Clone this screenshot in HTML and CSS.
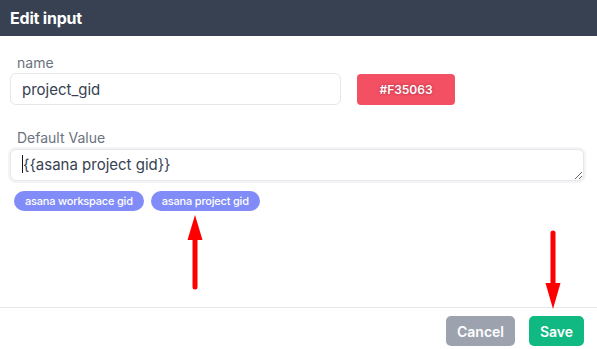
FILE: index.html
```html
<!DOCTYPE html>
<html>
<head>
<meta charset="utf-8">
<link rel="stylesheet" href="styles.css">
</head>
<body>
<div class="modal">
  <div class="header">Edit input</div>
  <div class="content">
    <div class="field">
      <label class="label">name</label>
      <div class="row">
        <input class="input" type="text" value="project_gid">
        <button class="color-btn">#F35063</button>
      </div>
    </div>
    <div class="field field-default">
      <label class="label">Default Value</label>
      <div class="ta-wrap">
        <textarea class="textarea" rows="1">{{asana project gid}}</textarea>
        <span class="caret"></span>
      </div>
      <div class="chips">
        <span class="chip">asana workspace gid</span>
        <span class="chip">asana project gid</span>
      </div>
    </div>
  </div>
  <div class="footer">
    <button class="btn btn-cancel">Cancel</button>
    <button class="btn btn-save">Save</button>
  </div>
  <svg class="arrow arrow-up" width="20" height="80" viewBox="0 0 20 80">
    <polygon points="10,0 2.5,25 17.5,25" fill="#ff0000"/>
    <line x1="10" y1="22" x2="10" y2="72" stroke="#ff0000" stroke-width="5" stroke-linecap="round"/>
  </svg>
  <svg class="arrow arrow-down" width="20" height="80" viewBox="0 0 20 80">
    <line x1="10" y1="3" x2="10" y2="56" stroke="#ff0000" stroke-width="5" stroke-linecap="round"/>
    <polygon points="10,79 2.5,53 17.5,53" fill="#ff0000"/>
  </svg>
</div>
</body>
</html>
```
FILE: styles.css
```css
* { box-sizing: border-box; }
html, body { margin: 0; padding: 0; }
body {
  width: 597px;
  height: 349px;
  background: #ffffff;
  font-family: Inter, "Noto Sans", sans-serif;
  overflow: hidden;
}
.modal {
  position: relative;
  width: 597px;
  height: 349px;
  display: flex;
  flex-direction: column;
}
.header {
  height: 36px;
  background: #374151;
  color: #ffffff;
  font-size: 16px;
  font-weight: 700;
  line-height: 36px;
  padding: 0 10px;
  letter-spacing: -0.2px;
}
.content {
  flex: 1;
  padding: 17px 13px 0 10px;
}
.field { display: flex; flex-direction: column; }
.field-default { margin-top: 23px; }
.label {
  font-size: 14px;
  line-height: 20px;
  color: #6b7280;
  padding-left: 7px;
}
.row {
  display: flex;
  align-items: center;
  gap: 16px;
}
.input {
  width: 331px;
  height: 32px;
  border: 1px solid #e5e7eb;
  border-radius: 6px;
  padding: 0 11px;
  font-family: Inter, "Noto Sans", sans-serif;
  font-size: 15px;
  color: #374151;
  outline: none;
}
.color-btn {
  width: 98px;
  height: 31px;
  border: none;
  border-radius: 4px;
  background: #f35063;
  color: #ffffff;
  font-family: Inter, "Noto Sans", sans-serif;
  font-size: 12px;
  font-weight: 600;
  text-shadow: 0 0 3px rgba(120, 20, 40, 0.6);
  padding: 0;
}
.ta-wrap {
  position: relative;
  margin-top: 1px;
  width: 574px;
}
.textarea {
  display: block;
  width: 574px;
  height: 32px;
  border: 1px solid #e5e7eb;
  border-radius: 6px;
  box-shadow: 0 0 0 2px #f3f4f6;
  padding: 4px 12px;
  font-family: Inter, "Noto Sans", sans-serif;
  font-size: 15px;
  line-height: 22px;
  color: #374151;
  resize: vertical;
  outline: none;
  overflow: hidden;
}
.caret {
  position: absolute;
  left: 12px;
  top: 6px;
  width: 1px;
  height: 18px;
  background: #111827;
}
.chips {
  display: flex;
  gap: 7px;
  margin-top: 10px;
  padding-left: 4px;
}
.chip {
  height: 20px;
  line-height: 20px;
  padding: 0 11px;
  border-radius: 10px;
  background: #818cf8;
  color: #ffffff;
  font-size: 11px;
  font-weight: 500;
  letter-spacing: -0.2px;
}
.footer {
  border-top: 1px solid #e5e7eb;
  height: 42px;
  display: flex;
  justify-content: flex-end;
  align-items: flex-start;
  gap: 14px;
  padding: 8px 13px 0 0;
}
.btn {
  height: 30px;
  border: none;
  border-radius: 5px;
  color: #ffffff;
  font-family: Inter, "Noto Sans", sans-serif;
  font-size: 14px;
  font-weight: 600;
  padding: 0;
}
.btn-cancel { width: 69px; background: #9ca3af; }
.btn-save { width: 55px; background: #10b981; }
.arrow { position: absolute; }
.arrow-up { left: 185px; top: 215px; }
.arrow-down { left: 543px; top: 230px; }
```
